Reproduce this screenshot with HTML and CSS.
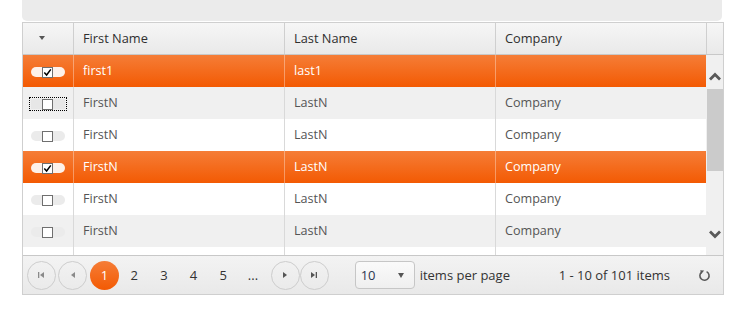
FILE: index.html
```html
<!DOCTYPE html>
<html>
<head>
<meta charset="utf-8">
<link rel="stylesheet" href="styles.css">
</head>
<body>
<div class="toolbar"></div>
<div class="grid">
  <div class="header">
    <div class="hcell c-sel"><span class="sort-arrow"></span></div>
    <div class="hcell c-col">First Name</div>
    <div class="hcell c-col">Last Name</div>
    <div class="hcell c-col">Company</div>
    <div class="hcell c-scroll"></div>
  </div>
  <div class="body">
    <div class="rows">
      <div class="row selected">
        <div class="cell c-sel"><span class="pill"><span class="cb checked"><svg viewBox="0 0 9 9" width="9" height="9"><path d="M1.3 4.6 L3.6 7 L7.8 1.4" fill="none" stroke="#000" stroke-width="1.5"/></svg></span></span></div>
        <div class="cell c-col">first1</div>
        <div class="cell c-col">last1</div>
        <div class="cell c-col c-last"></div>
      </div>
      <div class="row alt">
        <div class="cell c-sel"><span class="focus-wrap"><span class="pill flat"><span class="cb"></span></span></span></div>
        <div class="cell c-col">FirstN</div>
        <div class="cell c-col">LastN</div>
        <div class="cell c-col c-last">Company</div>
      </div>
      <div class="row">
        <div class="cell c-sel"><span class="pill"><span class="cb"></span></span></div>
        <div class="cell c-col">FirstN</div>
        <div class="cell c-col">LastN</div>
        <div class="cell c-col c-last">Company</div>
      </div>
      <div class="row selected">
        <div class="cell c-sel"><span class="pill"><span class="cb checked"><svg viewBox="0 0 9 9" width="9" height="9"><path d="M1.3 4.6 L3.6 7 L7.8 1.4" fill="none" stroke="#000" stroke-width="1.5"/></svg></span></span></div>
        <div class="cell c-col">FirstN</div>
        <div class="cell c-col">LastN</div>
        <div class="cell c-col c-last">Company</div>
      </div>
      <div class="row">
        <div class="cell c-sel"><span class="pill"><span class="cb"></span></span></div>
        <div class="cell c-col">FirstN</div>
        <div class="cell c-col">LastN</div>
        <div class="cell c-col c-last">Company</div>
      </div>
      <div class="row alt">
        <div class="cell c-sel"><span class="pill faint"><span class="cb"></span></span></div>
        <div class="cell c-col">FirstN</div>
        <div class="cell c-col">LastN</div>
        <div class="cell c-col c-last">Company</div>
      </div>
      <div class="row">
        <div class="cell c-sel"><span class="pill"><span class="cb"></span></span></div>
        <div class="cell c-col">FirstN</div>
        <div class="cell c-col">LastN</div>
        <div class="cell c-col c-last">Company</div>
      </div>
    </div>
    <div class="vscroll">
      <div class="sbtn up"><svg width="12" height="9" viewBox="0 0 12 9"><polyline points="1,7.5 6,2.5 11,7.5" fill="none" stroke="#595959" stroke-width="2.8"/></svg></div>
      <div class="track"><div class="thumb"></div></div>
      <div class="sbtn down"><svg width="12" height="9" viewBox="0 0 12 9"><polyline points="1,1.5 6,6.5 11,1.5" fill="none" stroke="#595959" stroke-width="2.8"/></svg></div>
    </div>
  </div>
  <div class="pager">
    <span class="pbtn first"><svg width="8" height="8" viewBox="0 0 8 8"><rect x="1" y="1" width="1.3" height="6" fill="#8a8a8a"/><polygon points="7,1 7,7 3,4" fill="#8a8a8a"/></svg></span>
    <span class="pbtn prev"><svg width="8" height="8" viewBox="0 0 8 8"><polygon points="6,1 6,7 2,4" fill="#8a8a8a"/></svg></span>
    <span class="page current">1</span>
    <span class="page">2</span>
    <span class="page">3</span>
    <span class="page">4</span>
    <span class="page">5</span>
    <span class="page">...</span>
    <span class="pbtn next"><svg width="8" height="8" viewBox="0 0 8 8"><polygon points="2,1 2,7 6,4" fill="#555"/></svg></span>
    <span class="pbtn last"><svg width="8" height="8" viewBox="0 0 8 8"><polygon points="1,1 1,7 5,4" fill="#555"/><rect x="5.7" y="1" width="1.3" height="6" fill="#555"/></svg></span>
    <span class="select"><span class="sel-val">10</span><span class="sel-arrow"></span></span>
    <span class="ipp">items per page</span>
    <span class="info">1 - 10 of 101 items</span>
    <span class="refresh"><svg width="13" height="13" viewBox="0 0 13 13"><path d="M8.6 2.6 A4.6 4.6 0 1 1 3.6 3.1" fill="none" stroke="#5a5a5a" stroke-width="1.6"/><polygon points="2.2,1.2 6.2,1.6 3.2,5" fill="#5a5a5a"/></svg></span>
  </div>
</div>
</body>
</html>
```

FILE: styles.css
```css
html, body {
  margin: 0;
  padding: 0;
  background: #fff;
}
body {
  font-family: "Open Sans", "DejaVu Sans", sans-serif;
  font-size: 12.6px;
  line-height: 1.4;
  color: #333;
}
.toolbar {
  margin-left: 22px;
  width: 700px;
  height: 21px;
  background: #ebebeb;
  border-radius: 0 0 5px 5px;
}
.grid {
  margin-top: 1px;
  margin-left: 22px;
  width: 700px;
  border: 1px solid #cfcfcf;
}
.header {
  display: flex;
  height: 31px;
  border-bottom: 1px solid #c8c8c8;
  background: linear-gradient(#f6f6f6, #e9e9e9);
}
.hcell {
  display: flex;
  align-items: center;
  box-sizing: border-box;
  border-right: 1px solid #cfcfcf;
  color: #2f2f2f;
  font-size: 12.8px;
}
.c-sel { width: 51px; flex: none; }
.c-col { width: 211px; flex: none; padding-left: 9px; box-sizing: border-box; }
.hcell.c-scroll { width: 16px; flex: none; border-right: none; }
.hcell.c-sel { padding-left: 16px; }
.sort-arrow {
  width: 0;
  height: 0;
  border-left: 3px solid transparent;
  border-right: 3px solid transparent;
  border-top: 4px solid #555;
  margin-top: -2px;
}
.body {
  display: flex;
  height: 200px;
  overflow: hidden;
}
.rows {
  width: 683px;
  flex: none;
}
.row {
  display: flex;
  height: 32px;
  background: #fff;
  color: #555;
}
.row.alt { background: #f0f0f0; }
.row.selected {
  background: linear-gradient(#f57d37, #f35a03);
  color: #fff;
}
.cell {
  display: flex;
  align-items: center;
  box-sizing: border-box;
  border-right: 1px solid #d9d9d9;
}
.row.selected .cell { border-right-color: rgba(255, 255, 255, 0.35); }
.cell.c-last { width: 210px; border-right: none; }
.cell.c-sel { justify-content: center; }
.pill {
  display: flex;
  align-items: center;
  justify-content: center;
  width: 34px;
  height: 10px;
  border-radius: 5px;
  background: #ebebeb;
  margin-left: -1px;
  margin-top: 2px;
}
.row.selected .pill { background: #fdf1ea; }
.pill.faint { background: #ebebeb; }
.focus-wrap {
  display: flex;
  margin-top: 2px;
  margin-left: -1px;
  outline: 1px dotted #000;
  outline-offset: 1px;
}
.pill.flat {
  margin: 0;
  background: #e7e7e7;
  border-radius: 0;
}
.cb {
  display: flex;
  align-items: center;
  justify-content: center;
  width: 11px;
  height: 11px;
  box-sizing: border-box;
  border: 1px solid #6f6f6f;
  background: #fff;
}
.cb svg { display: block; }
.vscroll {
  width: 17px;
  flex: none;
  background: #f0f0f0;
  display: flex;
  flex-direction: column;
}
.sbtn {
  display: flex;
  align-items: center;
  justify-content: center;
}
.sbtn.up { height: 34px; padding-top: 8px; box-sizing: border-box; }
.sbtn.down { height: 33px; padding-top: 1px; box-sizing: border-box; }
.track {
  height: 128px;
  padding-left: 1px;
}
.thumb {
  height: 82px;
  background: #cbcbcb;
}
.pager {
  display: flex;
  align-items: center;
  height: 38px;
  border-top: 1px solid #c8c8c8;
  background: linear-gradient(#f3f3f3, #e9e9e9);
}
.pbtn {
  display: flex;
  align-items: center;
  justify-content: center;
  width: 29px;
  height: 29px;
  box-sizing: border-box;
  border: 1px solid #cdcdcd;
  border-radius: 50%;
}
.pbtn svg { display: block; }
.first { margin-left: 3.5px; }
.prev { margin-left: 2.5px; }
.next { margin-left: 2.5px; }
.page {
  display: flex;
  align-items: center;
  justify-content: center;
  width: 29px;
  height: 29px;
  margin-right: 0.7px;
  color: #333;
  font-size: 13px;
  line-height: 1;
}
.page.current {
  margin-left: 3px;
  border-radius: 50%;
  background: linear-gradient(#f57d37, #f35a03);
  color: #fff;
}
.select {
  display: flex;
  align-items: center;
  justify-content: space-between;
  margin-left: 26px;
  width: 60px;
  height: 28px;
  box-sizing: border-box;
  border: 1px solid #c6c6c6;
  border-radius: 4px;
  background: linear-gradient(#fafafa, #efefef);
  padding: 0 10px 0 5px;
}
.sel-val { color: #2d3650; font-size: 13px; }
.sel-arrow {
  width: 0;
  height: 0;
  border-left: 3.5px solid transparent;
  border-right: 3.5px solid transparent;
  border-top: 5px solid #555;
}
.ipp { margin-left: 5px; color: #333; font-size: 13px; }
.info {
  margin-left: auto;
  margin-right: 20px;
  color: #333;
  font-size: 13px;
}
.refresh {
  display: flex;
  align-items: center;
  justify-content: center;
  width: 28px;
  height: 28px;
  margin-right: 5px;
}
.refresh svg { display: block; }
```
